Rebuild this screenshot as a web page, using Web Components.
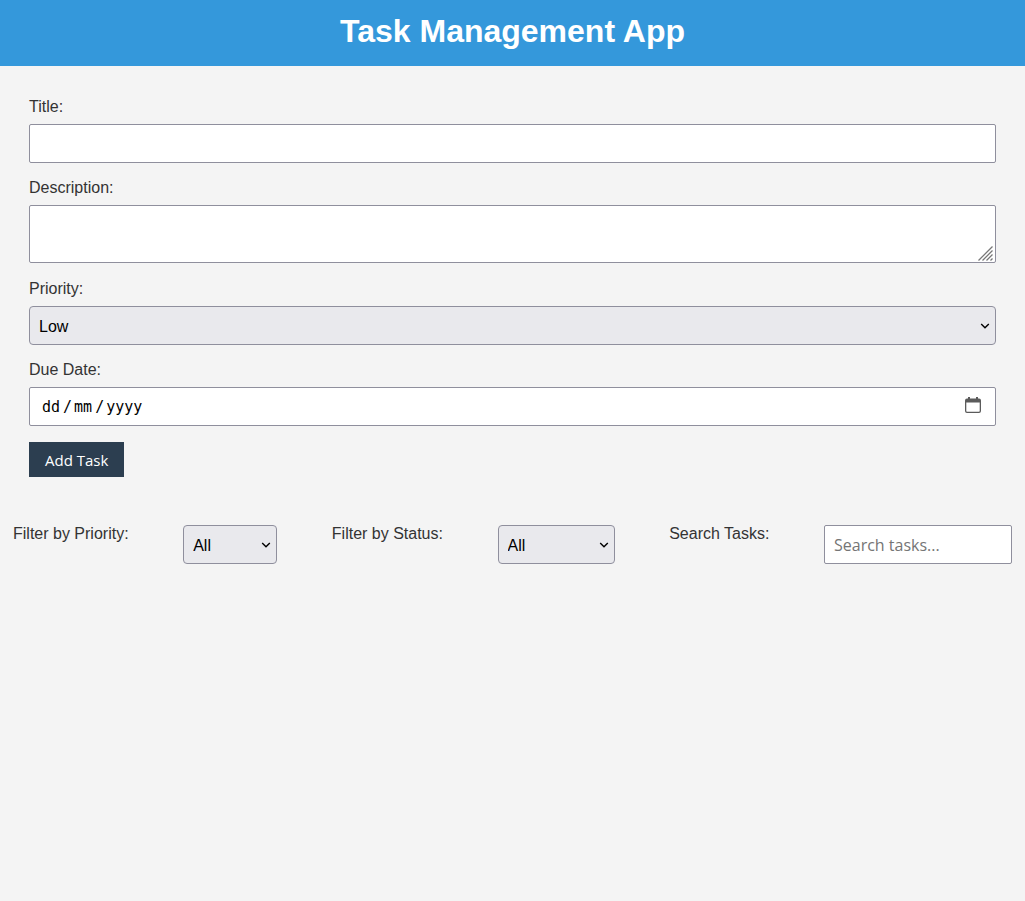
<!DOCTYPE html>
<html lang="en">
<head>
<meta charset="utf-8">
<meta name="viewport" content="width=device-width, initial-scale=1">
<title>Task Management App</title>
<style>
  body {
    margin: 0;
    background: #f4f4f4;
    color: #333;
    font: 16px/18px "Liberation Sans", Arial, sans-serif;
    --edge: #8f8f9d;
    --ui-font: "Open Sans", "Noto Sans", sans-serif;
  }
</style>
</head>
<body>
<task-app></task-app>
<script>
const controlStyles = `
  * { box-sizing: border-box; }
  label { display: block; }
  input, textarea, select {
    display: block;
    width: 100%;
    margin: 0;
    padding: 8px 9px;
    border: 1px solid var(--edge);
    border-radius: 2px;
    background: #fff;
    color: #000;
    font: 16px/21px var(--ui-font);
  }
  input, select { height: 39px; }
  select {
    appearance: none;
    padding: 9px 24px 7px 9px;
    border-radius: 4px;
    background: #e9e9ed;
    font-family: "Liberation Sans", Arial, sans-serif;
  }
  .stack { display: grid; align-items: center; }
  .stack > * { grid-area: 1 / 1; }
  .stack > svg { justify-self: end; pointer-events: none; }
  .chevron { margin-right: 6px; }
`;
const chevron = `<svg class="chevron" width="10" height="10" viewBox="0 0 10 10" aria-hidden="true"><path d="M1.2 3 5 6.8 8.800 3" fill="none" stroke="#000" stroke-width="1.4"/></svg>`;
const optionList = (text) => text.split(",").map((o) => `<option>${o}</option>`).join("");

class AppHeader extends HTMLElement {
  constructor() {
    super();
    this.attachShadow({ mode: "open" }).innerHTML = `
      <style>
        :host { display: block; padding: 12px 16px 16px; background: #3498db; color: #fff; text-align: center; }
        h1 { margin: 0; font-size: 32px; line-height: 38px; font-weight: 700; }
      </style>
      <h1><slot></slot></h1>`;
  }
}
customElements.define("app-header", AppHeader);

class FormField extends HTMLElement {
  connectedCallback() {
    if (this.shadowRoot) return;
    this.attachShadow({ mode: "open" }).innerHTML = `
      <style>${controlStyles}
        :host { display: block; }
        label { margin-bottom: 8px; }
        textarea { height: 58px; margin-bottom: 1px; resize: none; }
        input[type="date"]:not(.filled) { color: transparent; }
        input[type="date"]::-webkit-calendar-picker-indicator { opacity: 0; }
        .grip { align-self: end; margin: 0 3px 3px 0; }
        .calendar { margin: 0 15px 4px 0; }
        .hint { display: flex; gap: 3px; padding-left: 13px; pointer-events: none; color: #000;
                font: 15px/20px "DejaVu Sans Mono", monospace; }
        .hint i { width: 8px; font-style: normal; text-align: center; }
        .filled + .hint { visibility: hidden; }
      </style>
      <label for="control">${this.getAttribute("label")}</label>
      ${this.control()}`;
  }
  control() { return `<input id="control" type="text">`; }
}
customElements.define("text-field", FormField);

class TextAreaField extends FormField {
  control() {
    return `<div class="stack"><textarea id="control"></textarea>
      <svg class="grip" width="15" height="15" viewBox="0 0 15 15" aria-hidden="true">
        <path d="M.5 14.5 14.5.5M4.5 14.5l10-10M8.5 14.5l6-6M12.5 14.5l2-2" fill="none" stroke="#777" stroke-width="1.3"/>
      </svg></div>`;
  }
}
customElements.define("textarea-field", TextAreaField);

class SelectField extends FormField {
  control() {
    return `<div class="stack"><select id="control">${optionList(this.getAttribute("options"))}</select>${chevron}</div>`;
  }
}
customElements.define("select-field", SelectField);

class DateField extends FormField {
  control() {
    return `<div class="stack"><input id="control" type="date">
      <div class="hint" aria-hidden="true"><span>dd</span><i>/</i><span>mm</span><i>/</i><span>yyyy</span></div>
      <svg class="calendar" width="16" height="16" viewBox="0 0 16 16" aria-hidden="true">
        <path fill="#5b5b5b" fill-rule="evenodd" d="M3 0h2v1.500h6V0h2v1.500h1a2 2 0 0 1 2 2V14a2 2 0 0 1-2 2H2a2 2 0 0 1-2-2V3.500a2 2 0 0 1 2-2h1zM1.300 5.500V14q0 .7.7.7h12q.7 0 .7-.7V5.500z"/>
      </svg></div>`;
  }
  connectedCallback() {
    super.connectedCallback();
    const input = this.shadowRoot.querySelector("input");
    input.addEventListener("input", () => input.classList.toggle("filled", input.value !== ""));
  }
}
customElements.define("date-field", DateField);

class PrimaryButton extends HTMLElement {
  constructor() {
    super();
    this.attachShadow({ mode: "open" }).innerHTML = `
      <style>
        :host { display: block; }
        button { display: block; margin: 0; padding: 8px 16px 6px; border: 0; background: #2c3e50; color: #fff;
                 font: 15px/21px var(--ui-font); cursor: pointer; }
      </style>
      <button type="button"><slot></slot></button>`;
  }
}
customElements.define("primary-button", PrimaryButton);

/* The label and its control take part in the filter bar's own flex row. */
class FilterControl extends HTMLElement {
  connectedCallback() {
    if (this.shadowRoot) return;
    const options = this.getAttribute("options");
    this.attachShadow({ mode: "open" }).innerHTML = `
      <style>${controlStyles}
        :host { display: contents; }
        .box { width: var(--control-width); }
        input::placeholder { color: #757575; opacity: 1; }
      </style>
      <label for="control">${this.getAttribute("label")}</label>
      <div class="box stack">${options
        ? `<select id="control">${optionList(options)}</select>${chevron}`
        : `<input id="control" type="text" placeholder="${this.getAttribute("placeholder")}">`}</div>`;
  }
}
customElements.define("filter-control", FilterControl);

class TaskApp extends HTMLElement {
  constructor() {
    super();
    this.attachShadow({ mode: "open" }).innerHTML = `
      <style>
        :host { display: block; }
        form { display: grid; gap: 16px; padding: 32px 29px; }
        section { display: flex; justify-content: space-between; align-items: flex-start; padding: 16px 13px; }
        .priority { --control-width: 94px; }
        .status { --control-width: 117px; }
        .search { --control-width: 188px; }
      </style>
      <app-header>Task Management App</app-header>
      <main>
        <form>
          <text-field label="Title:"></text-field>
          <textarea-field label="Description:"></textarea-field>
          <select-field label="Priority:" options="Low,Medium,High"></select-field>
          <date-field label="Due Date:"></date-field>
          <primary-button>Add Task</primary-button>
        </form>
        <section>
          <filter-control class="priority" label="Filter by Priority:" options="All,Low,Medium,High"></filter-control>
          <filter-control class="status" label="Filter by Status:" options="All,Pending,Completed"></filter-control>
          <filter-control class="search" label="Search Tasks:" placeholder="Search tasks..."></filter-control>
        </section>
      </main>`;
  }
}
customElements.define("task-app", TaskApp);
</script>
</body>
</html>
